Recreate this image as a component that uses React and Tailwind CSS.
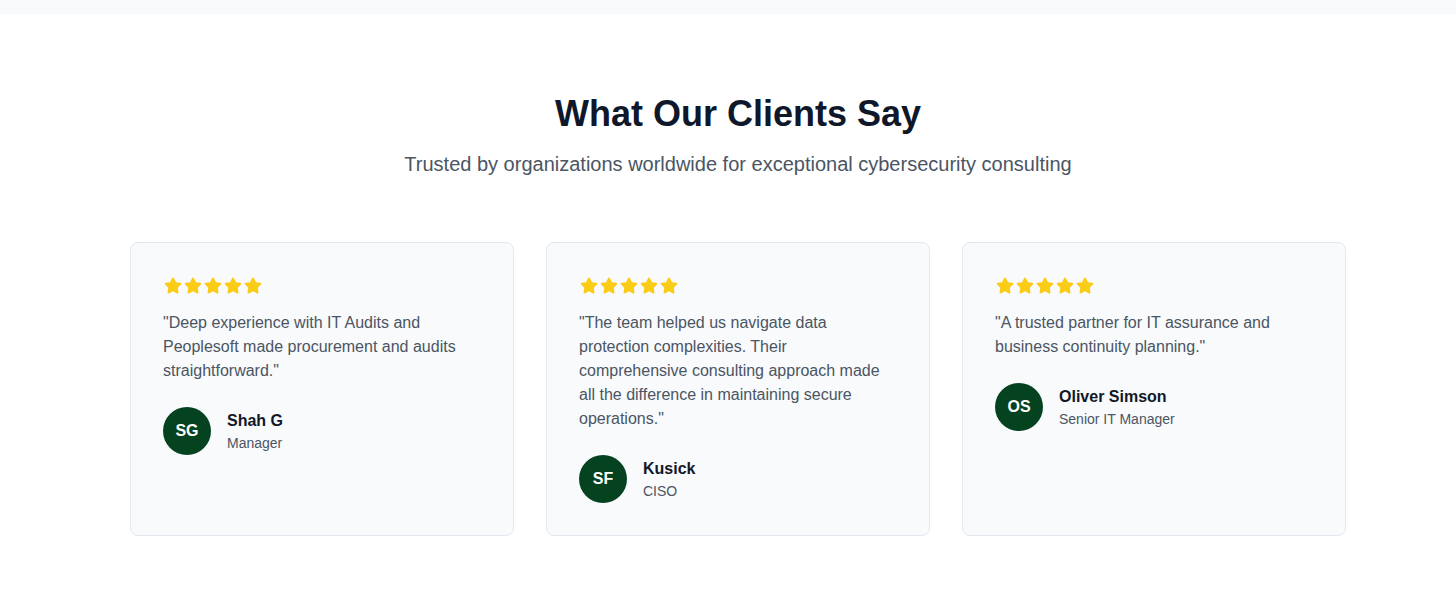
import React from 'react';

const testimonials = [
  {
    quote: '"Deep experience with IT Audits and Peoplesoft made procurement and audits straightforward."',
    initials: 'SG',
    name: 'Shah G',
    role: 'Manager',
  },
  {
    quote: '"The team helped us navigate data protection complexities. Their comprehensive consulting approach made all the difference in maintaining secure operations."',
    initials: 'SF',
    name: 'Kusick',
    role: 'CISO',
  },
  {
    quote: '"A trusted partner for IT assurance and business continuity planning."',
    initials: 'OS',
    name: 'Oliver Simson',
    role: 'Senior IT Manager',
  },
];

const Star = () => (
  <svg viewBox="0 0 576 512" className="w-[18px] h-[17px] text-[#facc15]" fill="currentColor">
    <path d="M316.9 18C311.6 7 300.4 0 288.1 0s-23.4 7-28.8 18L195 150.3 51.4 171.5c-12 1.8-22 10.2-25.7 21.7s-.7 24.2 7.9 32.7L137.8 329 113.2 474.7c-2 12 3 24.2 12.9 31.3s23 8 33.8 2.3l128.3-68.5 128.3 68.5c10.8 5.7 23.9 4.9 33.8-2.3s14.9-19.3 12.9-31.3L438.5 329 542.7 225.9c8.6-8.5 11.7-21.2 7.9-32.7s-13.7-19.9-25.7-21.7L381.2 150.3 316.9 18z" />
  </svg>
);

const TestimonialCard = ({ t }) => (
  <div className="bg-[#f8fafc] border border-[#e2e8f0] rounded-lg p-8">
    <div className="flex items-center gap-[2px] h-5 mb-4 pl-px">
      {[0, 1, 2, 3, 4].map((i) => (
        <Star key={i} />
      ))}
    </div>
    <p className="text-base leading-6 text-[#4b5563]">{t.quote}</p>
    <div className="flex items-center mt-6">
      <div className="w-12 h-12 rounded-full bg-[#044220] flex items-center justify-center text-white font-bold text-base shrink-0">
        {t.initials}
      </div>
      <div className="ml-4">
        <div className="text-base font-bold text-[#111827] leading-6">{t.name}</div>
        <div className="text-sm text-[#4b5563] leading-5">{t.role}</div>
      </div>
    </div>
  </div>
);

export default function App() {
  return (
    <div className="min-h-screen bg-white" style={{ fontFamily: '"Liberation Sans", Arial, sans-serif' }}>
      {/* tail of previous section */}
      <div className="h-[14px] bg-[#f8f9fb]"></div>

      <section className="pt-20 pb-20 pl-[20px]">
        <div className="max-w-[1216px] mx-auto">
          <div className="text-center mb-16">
            <h2 className="text-4xl leading-10 font-bold text-[#0f172a] mb-4">What Our Clients Say</h2>
            <p className="text-xl leading-7 text-[#4b5563]">
              Trusted by organizations worldwide for exceptional cybersecurity consulting
            </p>
          </div>
          <div className="grid grid-cols-3 gap-8">
            {testimonials.map((t) => (
              <TestimonialCard key={t.name} t={t} />
            ))}
          </div>
        </div>
      </section>
    </div>
  );
}
